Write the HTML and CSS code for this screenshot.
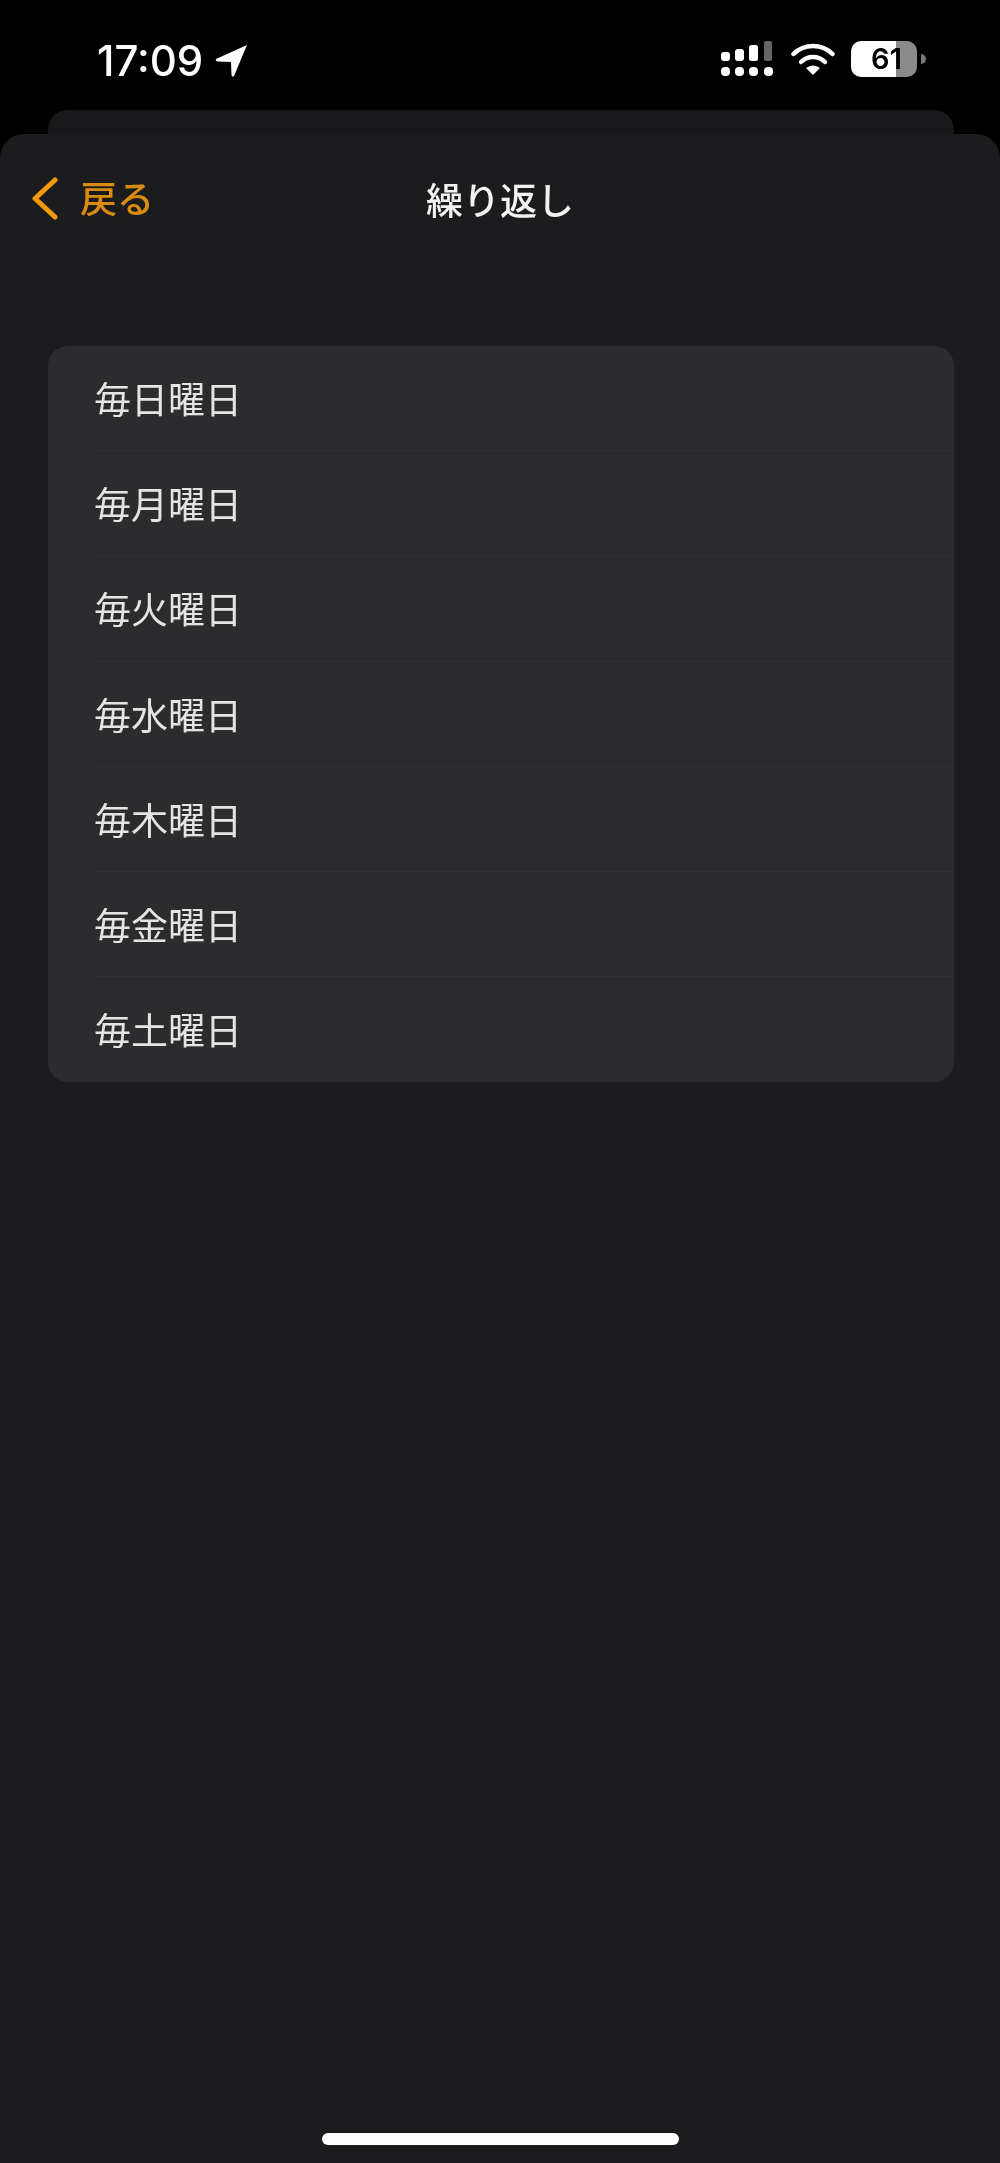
FILE: index.html
```html
<!DOCTYPE html>
<html lang="ja">
<head>
  <meta charset="utf-8">
  <meta name="viewport" content="width=device-width, initial-scale=1">
  <title>繰り返し</title>
  <link rel="stylesheet" href="styles.css">
</head>
<body>
  <div class="screen">
    <div class="status-bar">
      <div class="status-left">
        <span class="time">17:09</span>
        <svg class="location" viewBox="0 0 33 33"><path d="M32 1 L1 15 Q0 17 3 17.500 L16 18 L16.500 31 Q17 33.500 19 32 Z" fill="#fff"/></svg>
      </div>
      <div class="status-right">
        <svg class="signal" viewBox="0 0 53 35">
          <rect x="0" y="11" width="9" height="9" rx="3" fill="#fff"/>
          <rect x="14" y="8" width="9" height="12" rx="3" fill="#fff"/>
          <rect x="28" y="4" width="9" height="16" rx="2.500" fill="#fff"/>
          <rect x="43" y="0" width="8" height="20" rx="2" fill="#666"/>
          <rect x="0" y="26" width="9" height="9" rx="4" fill="#fff"/>
          <rect x="14" y="26" width="9" height="9" rx="4" fill="#fff"/>
          <rect x="28" y="26" width="9" height="9" rx="4" fill="#fff"/>
          <rect x="43" y="26" width="9" height="9" rx="4" fill="#fff"/>
        </svg>
        <svg class="wifi" viewBox="0 0 44 34">
          <path d="M2.500 13 A28 28 0 0 1 41.500 13" fill="none" stroke="#fff" stroke-width="4.500" stroke-linecap="round"/>
          <path d="M10 21 A17 17 0 0 1 34 21" fill="none" stroke="#fff" stroke-width="4.500" stroke-linecap="round"/>
          <path d="M22 34 L15 27 Q22 22 29 27 Z" fill="#fff"/>
        </svg>
        <div class="battery">61</div>
        <div class="battery-nub"></div>
      </div>
    </div>

    <div class="sheet-back"></div>

    <div class="sheet">
      <div class="nav">
        <div class="nav-back">
          <svg class="chevron" viewBox="0 0 27 43"><path d="M24 3 L4 21.500 L24 40" fill="none" stroke="#f09a0a" stroke-width="5" stroke-linecap="round" stroke-linejoin="round"/></svg>
          <span>戻る</span>
        </div>
        <div class="nav-title">繰り返し</div>
      </div>

      <div class="list">
        <div class="list-item"><div class="list-label">毎日曜日</div></div>
        <div class="list-item"><div class="list-label">毎月曜日</div></div>
        <div class="list-item"><div class="list-label">毎火曜日</div></div>
        <div class="list-item"><div class="list-label">毎水曜日</div></div>
        <div class="list-item"><div class="list-label">毎木曜日</div></div>
        <div class="list-item"><div class="list-label">毎金曜日</div></div>
        <div class="list-item"><div class="list-label">毎土曜日</div></div>
      </div>

      <div class="home-bar"></div>
    </div>
  </div>
</body>
</html>
```

FILE: styles.css
```css
html, body {
  margin: 0;
  background-color: #000;
}

body {
  font-family: "Noto Sans CJK JP", "Inter", sans-serif;
}

.screen {
  width: 1000px;
  height: 2163px;
  display: flex;
  flex-direction: column;
  overflow: hidden;
  filter: blur(0.7px);
}

/* status bar */
.status-bar {
  height: 110px;
  flex-shrink: 0;
  box-sizing: border-box;
  padding: 0 74px 0 97px;
  display: flex;
  justify-content: space-between;
  align-items: flex-start;
}

.status-left {
  display: flex;
  align-items: flex-start;
  margin-top: 34px;
}

.time {
  font-family: "Inter", sans-serif;
  font-size: 42px;
  font-weight: 500;
  line-height: 54px;
  color: #fff;
}

.location {
  width: 33px;
  height: 33px;
  margin: 10px 0 0 12px;
}

.status-right {
  display: flex;
  align-items: flex-start;
  margin-top: 41px;
}

.signal {
  width: 53px;
  height: 35px;
  margin-right: 17px;
}

.wifi {
  width: 44px;
  height: 34px;
  margin-right: 16px;
}

.battery {
  width: 66px;
  height: 36px;
  box-sizing: border-box;
  padding-left: 5px;
  border-radius: 10px;
  background: linear-gradient(to right, #fff 68%, #8a8a8a 68%);
  color: #000;
  font-family: "Inter", sans-serif;
  font-size: 29px;
  font-weight: 600;
  line-height: 36px;
  text-align: center;
}

.battery-nub {
  width: 5px;
  height: 10px;
  margin: 13px 0 0 4px;
  border-radius: 0 5px 5px 0;
  background-color: #777;
}

/* hojas */
.sheet-back {
  height: 24px;
  flex-shrink: 0;
  margin: 0 46px 0 48px;
  border-radius: 20px 20px 0 0;
  background-color: #19191b;
}

.sheet {
  flex: 1;
  display: flex;
  flex-direction: column;
  border-radius: 24px 24px 0 0;
  background-color: #1c1c1e;
}

/* nav */
.nav {
  position: relative;
  height: 132px;
  display: flex;
  align-items: center;
  justify-content: center;
}

.nav-back {
  position: absolute;
  left: 31px;
  top: 43px;
  display: flex;
  align-items: center;
  color: #d98c10;
  font-size: 37px;
  font-weight: 500;
  line-height: 44px;
}

.nav-back span {
  margin-top: -3px;
}

.chevron {
  width: 27px;
  height: 43px;
  margin-right: 22px;
}

.nav-title {
  color: #f2f2f2;
  font-size: 37px;
  font-weight: 500;
  line-height: 44px;
  margin-top: -3px;
}

/* lista */
.list {
  margin: 80px 46px 0 48px;
  border-radius: 20px;
  background-color: #2c2c2e;
}

.list-item {
  height: 105.200px;
  padding-left: 46px;
}

.list-label {
  height: 100%;
  box-sizing: border-box;
  padding-top: 29px;
  border-bottom: 1px solid #323234;
  color: #e4e4e4;
  font-size: 37px;
  line-height: 46px;
}

.list-item:last-child .list-label {
  border-bottom: none;
}

.home-bar {
  width: 357px;
  height: 12px;
  margin: auto auto 18px;
  border-radius: 6px;
  background-color: #fff;
}
```
